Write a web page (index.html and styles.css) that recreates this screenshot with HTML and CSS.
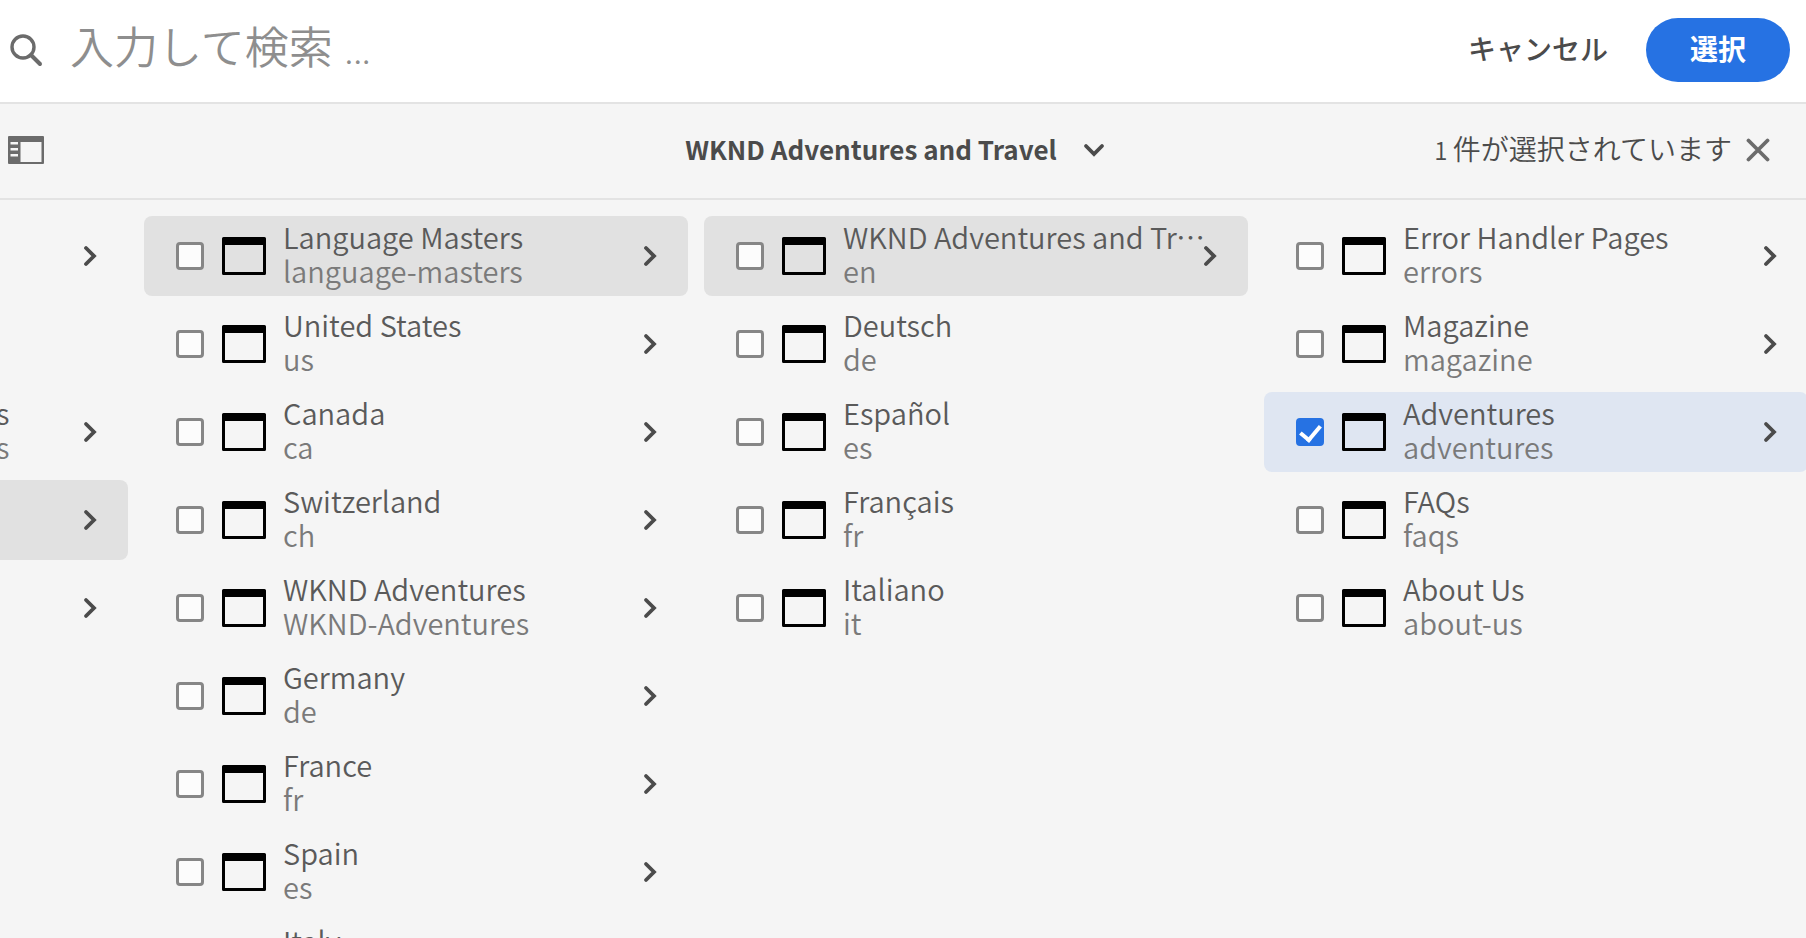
FILE: index.html
```
<!DOCTYPE html>
<html lang="ja">
<head>
<meta charset="utf-8">
<title>WKND Adventures and Travel</title>
<link rel="stylesheet" href="styles.css">
</head>
<body>
<svg class="sprite" aria-hidden="true">
  <symbol id="page" viewBox="0 0 44 38">
    <path fill-rule="evenodd" d="M1.500 0h41a1.500 1.500 0 0 1 1.500 1.500v35a1.500 1.500 0 0 1-1.500 1.500h-41A1.500 1.500 0 0 1 0 36.500v-35A1.500 1.500 0 0 1 1.500 0zM3 8v27h38V8z"/>
  </symbol>
  <symbol id="chevron" viewBox="0 0 14 22">
    <path d="M3 3l8 8-8 8" fill="none" stroke="currentColor" stroke-width="3.800" stroke-linecap="round"/>
  </symbol>
</svg>

<header class="searchbar">
  <svg class="search-icon" viewBox="0 0 34 34" aria-hidden="true">
    <circle cx="14" cy="14" r="11" fill="none" stroke="currentColor" stroke-width="3.400"/>
    <path d="M22 22l9 9" stroke="currentColor" stroke-width="4" stroke-linecap="round"/>
  </svg>
  <input class="search-input" type="text" aria-label="検索" placeholder="入力して検索 …">
  <button class="button button-quiet" type="button">キャンセル</button>
  <button class="button button-primary" type="button">選択</button>
</header>

<nav class="toolbar">
  <div class="toolbar-side">
    <button class="icon-button" type="button" aria-label="サイドパネル">
      <svg class="rail-icon" viewBox="0 0 36 28" aria-hidden="true">
        <path fill="currentColor" fill-rule="evenodd" d="M1 0h34a1 1 0 0 1 1 1v26a1 1 0 0 1-1 1H1a1 1 0 0 1-1-1V1a1 1 0 0 1 1-1zM12.500 6v20h21V6zM2.500 6v2.500h7.500V6zM2.500 12v2.500h7.500V12zM2.500 18v2.500h7.500V18z"/>
      </svg>
    </button>
  </div>
  <button class="title-button" type="button">
    <span class="title">WKND Adventures and Travel</span>
    <svg class="title-chevron" viewBox="0 0 22 14" aria-hidden="true"><path d="M3 3l8 8 8-8" fill="none" stroke="currentColor" stroke-width="3.800" stroke-linecap="round"/></svg>
  </button>
  <div class="toolbar-side toolbar-end">
    <span class="count"><span class="count-number">1 </span>件が選択されています</span>
    <button class="icon-button" type="button" aria-label="選択を解除">
      <svg class="close-icon" viewBox="0 0 24 24" aria-hidden="true"><path d="M2.500 2.500l19 19M21.500 2.500l-19 19" stroke="currentColor" stroke-width="3.800" stroke-linecap="round"/></svg>
    </button>
  </div>
</nav>

<main class="columns">
  <ul class="column column-cut">
    <li class="row"><svg class="chevron"><use href="#chevron"/></svg></li>
    <li class="row"></li>
    <li class="row"><span class="text"><span class="name">s</span><span class="slug">s</span></span><svg class="chevron"><use href="#chevron"/></svg></li>
    <li class="row row-open"><svg class="chevron"><use href="#chevron"/></svg></li>
    <li class="row"><svg class="chevron"><use href="#chevron"/></svg></li>
  </ul>

  <ul class="column">
    <li class="row row-open"><input class="check" type="checkbox" id="a1"><svg class="page"><use href="#page"/></svg><label class="text" for="a1"><span class="name">Language Masters</span><span class="slug">language-masters</span></label><svg class="chevron"><use href="#chevron"/></svg></li>
    <li class="row"><input class="check" type="checkbox" id="a2"><svg class="page"><use href="#page"/></svg><label class="text" for="a2"><span class="name">United States</span><span class="slug">us</span></label><svg class="chevron"><use href="#chevron"/></svg></li>
    <li class="row"><input class="check" type="checkbox" id="a3"><svg class="page"><use href="#page"/></svg><label class="text" for="a3"><span class="name">Canada</span><span class="slug">ca</span></label><svg class="chevron"><use href="#chevron"/></svg></li>
    <li class="row"><input class="check" type="checkbox" id="a4"><svg class="page"><use href="#page"/></svg><label class="text" for="a4"><span class="name">Switzerland</span><span class="slug">ch</span></label><svg class="chevron"><use href="#chevron"/></svg></li>
    <li class="row"><input class="check" type="checkbox" id="a5"><svg class="page"><use href="#page"/></svg><label class="text" for="a5"><span class="name">WKND Adventures</span><span class="slug">WKND-Adventures</span></label><svg class="chevron"><use href="#chevron"/></svg></li>
    <li class="row"><input class="check" type="checkbox" id="a6"><svg class="page"><use href="#page"/></svg><label class="text" for="a6"><span class="name">Germany</span><span class="slug">de</span></label><svg class="chevron"><use href="#chevron"/></svg></li>
    <li class="row"><input class="check" type="checkbox" id="a7"><svg class="page"><use href="#page"/></svg><label class="text" for="a7"><span class="name">France</span><span class="slug">fr</span></label><svg class="chevron"><use href="#chevron"/></svg></li>
    <li class="row"><input class="check" type="checkbox" id="a8"><svg class="page"><use href="#page"/></svg><label class="text" for="a8"><span class="name">Spain</span><span class="slug">es</span></label><svg class="chevron"><use href="#chevron"/></svg></li>
    <li class="row"><input class="check" type="checkbox" id="a9"><svg class="page"><use href="#page"/></svg><label class="text" for="a9"><span class="name">Italy</span></label></li>
  </ul>

  <ul class="column">
    <li class="row row-open"><input class="check" type="checkbox" id="b1"><svg class="page"><use href="#page"/></svg><label class="text" for="b1"><span class="name name-long">WKND Adventures and Travel</span><span class="slug">en</span></label><svg class="chevron"><use href="#chevron"/></svg></li>
    <li class="row"><input class="check" type="checkbox" id="b2"><svg class="page"><use href="#page"/></svg><label class="text" for="b2"><span class="name">Deutsch</span><span class="slug">de</span></label></li>
    <li class="row"><input class="check" type="checkbox" id="b3"><svg class="page"><use href="#page"/></svg><label class="text" for="b3"><span class="name">Español</span><span class="slug">es</span></label></li>
    <li class="row"><input class="check" type="checkbox" id="b4"><svg class="page"><use href="#page"/></svg><label class="text" for="b4"><span class="name">Français</span><span class="slug">fr</span></label></li>
    <li class="row"><input class="check" type="checkbox" id="b5"><svg class="page"><use href="#page"/></svg><label class="text" for="b5"><span class="name">Italiano</span><span class="slug">it</span></label></li>
  </ul>

  <ul class="column">
    <li class="row"><input class="check" type="checkbox" id="c1"><svg class="page"><use href="#page"/></svg><label class="text" for="c1"><span class="name">Error Handler Pages</span><span class="slug">errors</span></label><svg class="chevron"><use href="#chevron"/></svg></li>
    <li class="row"><input class="check" type="checkbox" id="c2"><svg class="page"><use href="#page"/></svg><label class="text" for="c2"><span class="name">Magazine</span><span class="slug">magazine</span></label><svg class="chevron"><use href="#chevron"/></svg></li>
    <li class="row row-selected"><input class="check" type="checkbox" id="c3" checked><svg class="page"><use href="#page"/></svg><label class="text" for="c3"><span class="name">Adventures</span><span class="slug">adventures</span></label><svg class="chevron"><use href="#chevron"/></svg></li>
    <li class="row"><input class="check" type="checkbox" id="c4"><svg class="page"><use href="#page"/></svg><label class="text" for="c4"><span class="name">FAQs</span><span class="slug">faqs</span></label></li>
    <li class="row"><input class="check" type="checkbox" id="c5"><svg class="page"><use href="#page"/></svg><label class="text" for="c5"><span class="name">About Us</span><span class="slug">about-us</span></label></li>
  </ul>
</main>
</body>
</html>
```
FILE: styles.css
```
* {
  box-sizing: border-box;
}

body {
  margin: 0;
  height: 100vh;
  display: flex;
  flex-direction: column;
  overflow: hidden;
  background: #f5f5f5;
  color: #4b4b4b;
  font-family: "Noto Sans CJK JP", sans-serif;
  font-size: 28px;
}

button,
input {
  font: inherit;
  color: inherit;
}

button {
  border: 0;
  padding: 0;
  background: none;
}

.sprite {
  display: none;
}

/* Search bar */

.searchbar {
  flex: none;
  display: flex;
  align-items: center;
  height: 104px;
  padding: 0 16px 2px 9px;
  background: #fff;
  border-bottom: 2px solid #e3e3e3;
}

.search-icon {
  flex: none;
  width: 34px;
  height: 34px;
  color: #6b6b6b;
}

.search-input {
  flex: 1;
  min-width: 0;
  height: 64px;
  margin-left: 27px;
  padding: 0 0 2px;
  border: 0;
  outline: 0;
  background: none;
  font-family: Roboto, "Noto Sans CJK JP", sans-serif;
  font-size: 44px;
  font-weight: 350;
}

.search-input::placeholder {
  color: #8e8e8e;
  opacity: 1;
}

.button {
  flex: none;
  height: 64px;
  padding-bottom: 4px;
  border-radius: 32px;
}

.button-quiet {
  margin-right: 38px;
  font-weight: 500;
}

.button-primary {
  width: 144px;
  background: #2672e3;
  color: #fff;
  font-weight: 700;
}

/* Toolbar */

.toolbar {
  flex: none;
  display: flex;
  align-items: center;
  height: 96px;
  padding: 0 36px 2px 8px;
  border-bottom: 2px solid #e3e3e3;
}

.toolbar-side {
  flex: 1;
  display: flex;
  align-items: center;
}

.toolbar-end {
  justify-content: flex-end;
  gap: 14px;
}

.icon-button {
  display: flex;
  color: #6b6b6b;
}

.rail-icon {
  width: 36px;
  height: 28px;
}

.close-icon {
  width: 24px;
  height: 24px;
}

.title-button {
  display: flex;
  align-items: center;
  gap: 26px;
  margin-left: 12px;
  font-size: 26px;
  font-weight: 700;
}

.title,
.count {
  padding-bottom: 4px;
}

.title-chevron {
  width: 22px;
  height: 14px;
}

.count {
  font-weight: 350;
}

.count-number {
  font-size: 24px;
}

/* Column view */

.columns {
  flex: 1;
  min-height: 0;
  display: flex;
  gap: 16px;
  margin-right: -2px;
  padding-top: 16px;
  overflow: hidden;
}

.column {
  flex: 1;
  min-width: 0;
  margin: 0;
  padding: 0;
  list-style: none;
}

.column-cut {
  flex: 0 0 128px;
}

.row {
  display: flex;
  align-items: center;
  height: 80px;
  margin-bottom: 8px;
  padding: 0 31px 0 32px;
  border-radius: 8px;
}

.column-cut .row {
  padding-left: 0;
  border-top-left-radius: 0;
  border-bottom-left-radius: 0;
}

.row-open {
  background: #e1e1e1;
}

.row-selected {
  background: #dfe6f2;
}

.check {
  flex: none;
  display: grid;
  place-items: center;
  appearance: none;
  width: 28px;
  height: 28px;
  margin: 0 18px 0 0;
  border: 3px solid #868686;
  border-radius: 4px;
  background: #fcfcfc;
}

.check:checked {
  border-color: #2672e3;
  background: #2672e3;
}

.check:checked::after {
  content: "";
  width: 9px;
  height: 16px;
  margin-bottom: 4px;
  border: solid #fff;
  border-width: 0 4px 4px 0;
  transform: rotate(40deg);
}

.page {
  flex: none;
  width: 44px;
  height: 38px;
  margin-right: 17px;
}

.text {
  flex: 1;
  min-width: 0;
  height: 74px;
  font-size: 29px;
  font-weight: 350;
  line-height: 34px;
}

.column-cut .text {
  margin-left: -4px;
}

.name,
.slug {
  display: block;
  white-space: nowrap;
}

.name {
  color: #5a5a5a;
}

.name-long {
  margin-right: -8px;
  overflow-x: clip;
  text-overflow: ellipsis;
}

.slug {
  color: #7a7a7a;
}

.chevron {
  flex: none;
  width: 14px;
  height: 22px;
  margin-left: auto;
}
```
